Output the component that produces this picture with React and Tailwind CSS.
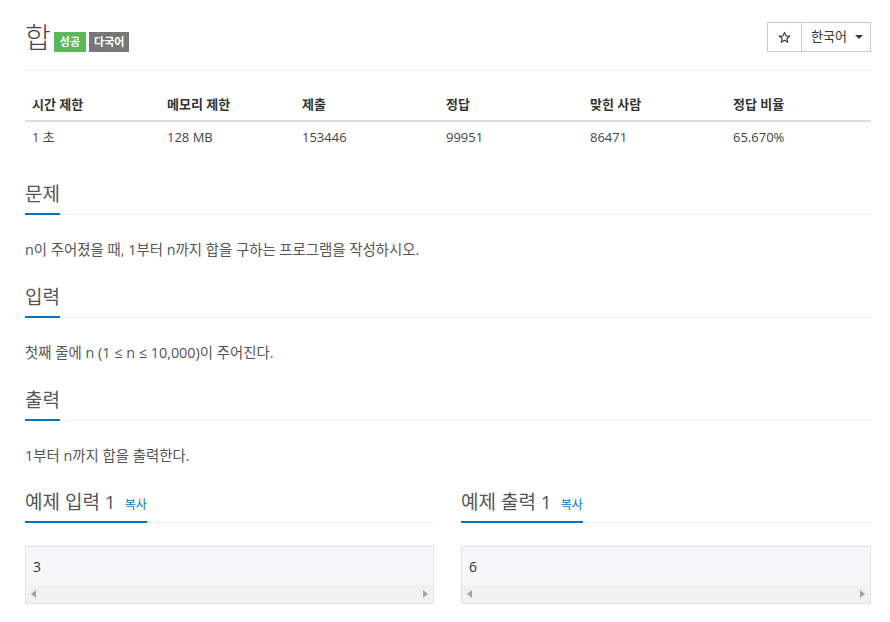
import React from "react";

const FONT = { fontFamily: '"Open Sans", "Noto Sans CJK KR", sans-serif' };

function Headline({ children, extra }) {
  return (
    <div className="flex border-b border-dotted border-[#dde3ea]">
      <div className="flex items-baseline gap-[9px] border-b-2 border-[#0076c0] pb-[5px] -mb-px">
        <span className="text-[19px] leading-[28px] text-[#555]">{children}</span>
        {extra}
      </div>
    </div>
  );
}

function Sample({ value }) {
  return (
    <div className="border border-[#e1e1e8] bg-[#f7f7f9]">
      <div className="h-[38px] flex items-center px-[7px] text-[14px] text-[#333]">{value}</div>
      <div className="h-[18px] bg-[#f1f1f1] flex items-center justify-between px-[5px]">
        <svg width="5" height="8" viewBox="0 0 5 8"><path d="M5 0 L0 4 L5 8 Z" fill="#a3a3a3" /></svg>
        <svg width="5" height="8" viewBox="0 0 5 8"><path d="M0 0 L5 4 L0 8 Z" fill="#a3a3a3" /></svg>
      </div>
    </div>
  );
}

export default function App() {
  const cols = ["시간 제한", "메모리 제한", "제출", "정답", "맞힌 사람", "정답 비율"];
  const vals = ["1 초", "128 MB", "153446", "99951", "86471", "65.670%"];
  return (
    <div className="w-[890px] h-[622px] bg-white overflow-hidden" style={FONT}>
      <div className="mx-[25px] w-[846px]">
        {/* Title */}
        <div className="flex justify-between items-start pt-[22px] h-[71px] border-b border-[#eee]">
          <div className="flex items-center gap-[3px]">
            <span className="text-[28px] leading-[30px] text-[#444] font-light">합</span>
            <span className="mt-[10px] h-[20px] px-[6px] bg-[#5cb85c] text-white text-[11px] font-bold flex items-center">성공</span>
            <span className="mt-[10px] h-[20px] px-[5px] bg-[#777] text-white text-[11px] font-bold flex items-center">다국어</span>
          </div>
          <div className="flex h-[30px] border border-[#ccc] text-[13px] text-[#333]">
            <div className="w-[34px] flex items-center justify-center border-r border-[#ccc]">
              <svg width="13" height="13" viewBox="0 0 24 24"><path d="M12 2.5 L14.8 9 L21.8 9.4 L16.4 13.9 L18.2 20.8 L12 17 L5.8 20.8 L7.6 13.9 L2.2 9.4 L9.2 9 Z" fill="none" stroke="#333" strokeWidth="2" strokeLinejoin="round" /></svg>
            </div>
            <div className="w-[68px] flex items-center pl-[9px] gap-[8px]">
              <span>한국어</span>
              <svg width="8" height="4" viewBox="0 0 8 4"><path d="M0 0 L8 0 L4 4 Z" fill="#333" /></svg>
            </div>
          </div>
        </div>

        {/* Table */}
        <div className="mt-[19px] text-[13px] text-[#333]">
          <div className="grid grid-cols-[135px_135px_144px_144px_143px_145px] h-[32px] border-b-2 border-[#ddd] items-center font-bold">
            {cols.map((c) => (
              <div key={c} className="px-[7px]">{c}</div>
            ))}
          </div>
          <div className="grid grid-cols-[135px_135px_144px_144px_143px_145px] h-[32px] items-center text-[#444]">
            {vals.map((v) => (
              <div key={v} className="px-[7px]">{v}</div>
            ))}
          </div>
        </div>

        {/* 문제 */}
        <div className="mt-[26px]">
          <Headline>문제</Headline>
        </div>
        <p className="mt-[23px] text-[14.4px] leading-[24px] text-[#555]">n이 주어졌을 때, 1부터 n까지 합을 구하는 프로그램을 작성하시오.</p>

        <div className="mt-[21px]">
          <Headline>입력</Headline>
        </div>
        <p className="mt-[23px] text-[14.4px] leading-[24px] text-[#555]">첫째 줄에 n (1 ≤ n ≤ 10,000)이 주어진다.</p>

        <div className="mt-[21px]">
          <Headline>출력</Headline>
        </div>
        <p className="mt-[23px] text-[14.4px] leading-[24px] text-[#555]">1부터 n까지 합을 출력한다.</p>

        <div className="mt-[20px] grid grid-cols-[409px_410px] gap-[27px]">
          <div>
            <Headline extra={<span className="text-[12px] text-[#0076c0]">복사</span>}>예제 입력 1</Headline>
            <div className="mt-[23px]"><Sample value="3" /></div>
          </div>
          <div>
            <Headline extra={<span className="text-[12px] text-[#0076c0]">복사</span>}>예제 출력 1</Headline>
            <div className="mt-[23px]"><Sample value="6" /></div>
          </div>
        </div>
      </div>
    </div>
  );
}
